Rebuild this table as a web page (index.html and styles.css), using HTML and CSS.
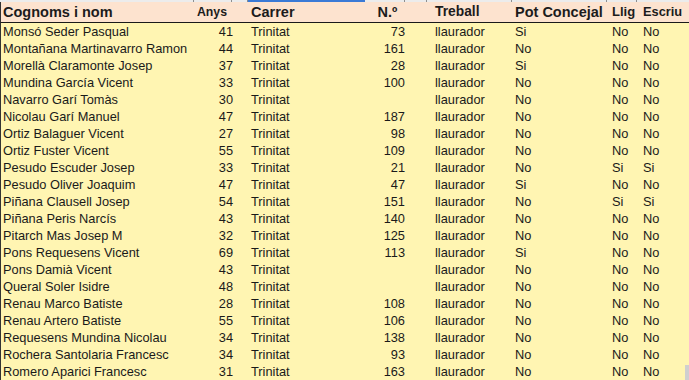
FILE: index.html
```html
<!DOCTYPE html>
<html lang="ca">
<head>
<meta charset="utf-8">
<title>Cognoms i nom</title>
<link rel="stylesheet" href="styles.css">
</head>
<body>
<div class="sheet">
  <div class="colbar">
    <span class="cb c1"></span><span class="cb c2"></span><span class="cb c3"></span><span class="cb c4 sel"></span><span class="cb c5"></span><span class="cb c6"></span><span class="cb c7"></span><span class="cb c8"></span><span class="cb c9"></span><span class="cb c10"></span>
  </div>
  <div class="row head">
    <div class="name h-name">Cognoms i nom</div>
    <div class="age h-age">Anys</div>
    <div class="street h-street">Carrer</div>
    <div class="num h-num">N.º</div>
    <div class="job h-job">Treball</div>
    <div class="pot h-pot">Pot Concejal</div>
    <div class="read h-read">Llig</div>
    <div class="write h-write">Escriu</div>
  </div>
  <div class="row"><div class="name">Monsó Seder Pasqual</div><div class="age">41</div><div class="street">Trinitat</div><div class="num">73</div><div class="job">llaurador</div><div class="pot">Si</div><div class="read">No</div><div class="write">No</div></div>
  <div class="row"><div class="name">Montañana Martinavarro Ramon</div><div class="age">44</div><div class="street">Trinitat</div><div class="num">161</div><div class="job">llaurador</div><div class="pot">No</div><div class="read">No</div><div class="write">No</div></div>
  <div class="row"><div class="name">Morellà Claramonte Josep</div><div class="age">37</div><div class="street">Trinitat</div><div class="num">28</div><div class="job">llaurador</div><div class="pot">Si</div><div class="read">No</div><div class="write">No</div></div>
  <div class="row"><div class="name">Mundina García Vicent</div><div class="age">33</div><div class="street">Trinitat</div><div class="num">100</div><div class="job">llaurador</div><div class="pot">No</div><div class="read">No</div><div class="write">No</div></div>
  <div class="row"><div class="name">Navarro Garí Tomàs</div><div class="age">30</div><div class="street">Trinitat</div><div class="num"></div><div class="job">llaurador</div><div class="pot">No</div><div class="read">No</div><div class="write">No</div></div>
  <div class="row"><div class="name">Nicolau Garí Manuel</div><div class="age">47</div><div class="street">Trinitat</div><div class="num">187</div><div class="job">llaurador</div><div class="pot">No</div><div class="read">No</div><div class="write">No</div></div>
  <div class="row"><div class="name">Ortiz Balaguer Vicent</div><div class="age">27</div><div class="street">Trinitat</div><div class="num">98</div><div class="job">llaurador</div><div class="pot">No</div><div class="read">No</div><div class="write">No</div></div>
  <div class="row"><div class="name">Ortiz Fuster Vicent</div><div class="age">55</div><div class="street">Trinitat</div><div class="num">109</div><div class="job">llaurador</div><div class="pot">No</div><div class="read">No</div><div class="write">No</div></div>
  <div class="row"><div class="name">Pesudo Escuder Josep</div><div class="age">33</div><div class="street">Trinitat</div><div class="num">21</div><div class="job">llaurador</div><div class="pot">No</div><div class="read">Si</div><div class="write">Si</div></div>
  <div class="row"><div class="name">Pesudo Oliver Joaquim</div><div class="age">47</div><div class="street">Trinitat</div><div class="num">47</div><div class="job">llaurador</div><div class="pot">Si</div><div class="read">No</div><div class="write">No</div></div>
  <div class="row"><div class="name">Piñana Clausell Josep</div><div class="age">54</div><div class="street">Trinitat</div><div class="num">151</div><div class="job">llaurador</div><div class="pot">No</div><div class="read">Si</div><div class="write">Si</div></div>
  <div class="row"><div class="name">Piñana Peris Narcís</div><div class="age">43</div><div class="street">Trinitat</div><div class="num">140</div><div class="job">llaurador</div><div class="pot">No</div><div class="read">No</div><div class="write">No</div></div>
  <div class="row"><div class="name">Pitarch Mas Josep M</div><div class="age">32</div><div class="street">Trinitat</div><div class="num">125</div><div class="job">llaurador</div><div class="pot">No</div><div class="read">No</div><div class="write">No</div></div>
  <div class="row"><div class="name">Pons Requesens Vicent</div><div class="age">69</div><div class="street">Trinitat</div><div class="num">113</div><div class="job">llaurador</div><div class="pot">Si</div><div class="read">No</div><div class="write">No</div></div>
  <div class="row"><div class="name">Pons Damià Vicent</div><div class="age">43</div><div class="street">Trinitat</div><div class="num"></div><div class="job">llaurador</div><div class="pot">No</div><div class="read">No</div><div class="write">No</div></div>
  <div class="row"><div class="name">Queral Soler Isidre</div><div class="age">48</div><div class="street">Trinitat</div><div class="num"></div><div class="job">llaurador</div><div class="pot">No</div><div class="read">No</div><div class="write">No</div></div>
  <div class="row"><div class="name">Renau Marco Batiste</div><div class="age">28</div><div class="street">Trinitat</div><div class="num">108</div><div class="job">llaurador</div><div class="pot">No</div><div class="read">No</div><div class="write">No</div></div>
  <div class="row"><div class="name">Renau Artero Batiste</div><div class="age">55</div><div class="street">Trinitat</div><div class="num">106</div><div class="job">llaurador</div><div class="pot">No</div><div class="read">No</div><div class="write">No</div></div>
  <div class="row"><div class="name">Requesens Mundina Nicolau</div><div class="age">34</div><div class="street">Trinitat</div><div class="num">138</div><div class="job">llaurador</div><div class="pot">No</div><div class="read">No</div><div class="write">No</div></div>
  <div class="row"><div class="name">Rochera Santolaria Francesc</div><div class="age">34</div><div class="street">Trinitat</div><div class="num">93</div><div class="job">llaurador</div><div class="pot">No</div><div class="read">No</div><div class="write">No</div></div>
  <div class="row"><div class="name">Romero Aparici Francesc</div><div class="age">31</div><div class="street">Trinitat</div><div class="num">163</div><div class="job">llaurador</div><div class="pot">No</div><div class="read">No</div><div class="write">No</div></div>
  <div class="scroll-stub"></div>
</div>
</body>
</html>
```

FILE: styles.css
```css
html, body {
  margin: 0;
  padding: 0;
  background: #fff5b2;
}

.sheet {
  position: relative;
  width: 689px;
  height: 380px;
  overflow: hidden;
  background: #fff5b2;
  font-family: "Liberation Sans", Arial, sans-serif;
  color: #1a1a1a;
}

.colbar {
  display: flex;
  height: 2px;
  background: #ececec;
}

.cb {
  display: block;
  height: 2px;
  box-sizing: border-box;
  border-right: 1px solid #8e8e8e;
}

.c1 { width: 194px; }
.c2 { width: 38px; }
.c3 { width: 16px; }
.c4 { width: 117px; }
.c5 { width: 40px; }
.c6 { width: 22px; }
.c7 { width: 85px; }
.c8 { width: 95px; }
.c9 { width: 30px; }
.c10 { width: 52px; border-right: none; }

.sel {
  background: #3a7ad6;
  border-right-color: #3a7ad6;
}

.row {
  display: grid;
  grid-template-columns: 194px 42px 129px 43px 104px 95px 30px 52px;
  height: 17px;
  line-height: 17px;
  font-size: 12.8px;
  border-left: 1px solid #333;
  box-sizing: border-box;
  white-space: nowrap;
}

.row > div {
  overflow: hidden;
}

.name { padding-left: 2px; }
.age { text-align: right; padding-right: 4px; }
.street { padding-left: 14px; }
.num { text-align: right; padding-right: 4px; }
.job { padding-left: 26px; }
.pot { padding-left: 2px; }
.read { padding-left: 4px; }
.write { padding-left: 5px; }

.row.head {
  height: 21px;
  line-height: 20px;
  background: #fde3cf;
  border-bottom: 1px solid #1a1a1a;
  font-weight: bold;
  font-size: 14.5px;
  color: #1c1c1c;
}

.head .h-age { font-size: 12.3px; padding-right: 10px; }
.head .h-num { text-align: center; padding-right: 0; padding-left: 0; }
.head .h-job { font-size: 13.8px; }
.head .h-read { font-size: 13px; }
.head .h-write { font-size: 12.8px; }

.scroll-stub {
  position: absolute;
  right: 0;
  bottom: 0;
  width: 4px;
  height: 15px;
  background: #cfcfcf;
}
```
